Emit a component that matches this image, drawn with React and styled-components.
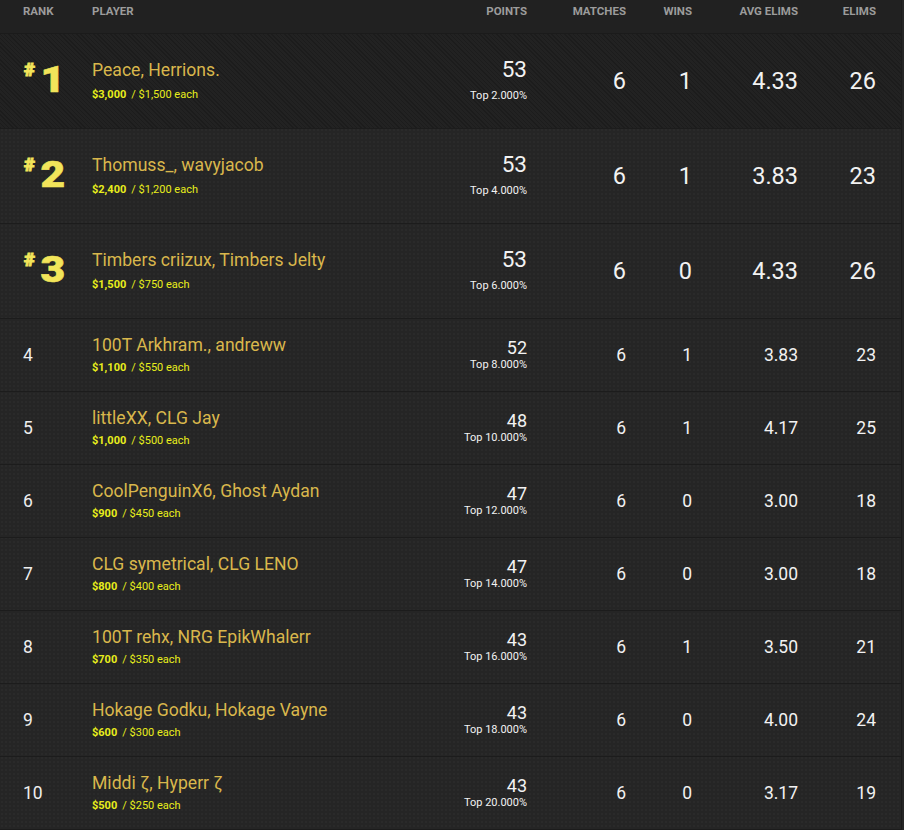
import React from 'react'
import styled, {createGlobalStyle, css} from 'styled-components'

const rows = [
  {rank: 1, name: 'Peace, Herrions.', total: '$3,000', each: '$1,500', points: 53, top: '2.000', matches: 6, wins: 1, avg: '4.33', elims: 26},
  {rank: 2, name: 'Thomuss_, wavyjacob', total: '$2,400', each: '$1,200', points: 53, top: '4.000', matches: 6, wins: 1, avg: '3.83', elims: 23},
  {rank: 3, name: 'Timbers criizux, Timbers Jelty', total: '$1,500', each: '$750', points: 53, top: '6.000', matches: 6, wins: 0, avg: '4.33', elims: 26},
  {rank: 4, name: '100T Arkhram., andreww', total: '$1,100', each: '$550', points: 52, top: '8.000', matches: 6, wins: 1, avg: '3.83', elims: 23},
  {rank: 5, name: 'littleXX, CLG Jay', total: '$1,000', each: '$500', points: 48, top: '10.000', matches: 6, wins: 1, avg: '4.17', elims: 25},
  {rank: 6, name: 'CoolPenguinX6, Ghost Aydan', total: '$900', each: '$450', points: 47, top: '12.000', matches: 6, wins: 0, avg: '3.00', elims: 18},
  {rank: 7, name: 'CLG symetrical, CLG LENO', total: '$800', each: '$400', points: 47, top: '14.000', matches: 6, wins: 0, avg: '3.00', elims: 18},
  {rank: 8, name: '100T rehx, NRG EpikWhalerr', total: '$700', each: '$350', points: 43, top: '16.000', matches: 6, wins: 1, avg: '3.50', elims: 21},
  {rank: 9, name: 'Hokage Godku, Hokage Vayne', total: '$600', each: '$300', points: 43, top: '18.000', matches: 6, wins: 0, avg: '4.00', elims: 24},
  {rank: 10, name: 'Middi ζ, Hyperr ζ', total: '$500', each: '$250', points: 43, top: '20.000', matches: 6, wins: 0, avg: '3.17', elims: 19},
]

const GlobalStyle = createGlobalStyle`
  body {
    margin: 0;
    background: #252525;
    font-family: Roboto, "Liberation Sans", sans-serif;
  }
`

const cols = '69px 335px 100px 99px 66px 106px 78px'

const Board = styled.div`
  width: 901px;
  border-right: 1px solid #1c1c1c;
  background-color: #252525;
  background-image: radial-gradient(rgba(255,255,255,0.025) 1px, transparent 1px);
  background-size: 4px 4px;
`

const HeadRow = styled.div`
  display: grid;
  grid-template-columns: ${cols};
  padding: 4px 25px 0 23px;
  box-sizing: border-box;
  background: #212121;
  border-bottom: 1px solid #1b1b1b;
  height: 34px;
`

const HeadCell = styled.div`
  font-size: 11.5px;
  font-weight: 700;
  color: #9c9c9c;
  text-transform: uppercase;
  text-align: ${p => p.$left ? 'left' : 'right'};
  line-height: 14px;
`

const Row = styled.div`
  display: grid;
  grid-template-columns: ${cols};
  align-items: center;
  padding: 0 25px 0 23px;
  box-sizing: border-box;
  height: ${p => p.$big ? '95px' : '73px'};
  border-bottom: 1px solid #1c1c1c;
  ${p => p.$hatch && css`
    background-color: #222;
    background-image: repeating-linear-gradient(45deg, rgba(0,0,0,0.18) 0 1px, transparent 1px 3px);
  `}
`

const RankPlain = styled.div`
  font-size: 17.5px;
  color: #eeeeee;
`

const RankBig = styled.div`
  display: flex;
  align-items: flex-start;
  color: #f2e55a;
  font-weight: 900;
  margin-top: -4px;
  span:first-child {
    font-size: 19px;
    line-height: 19px;
    margin: 1px 7px 0 1px;
    -webkit-text-stroke: 0.9px #f2e55a;
  }
  span:last-child {
    font-size: 37px;
    line-height: 38px;
    margin-top: 2px;
    transform: scaleX(1.15);
    -webkit-text-stroke: 0.6px #f2e55a;
  }
`

const Player = styled.div`
  display: flex;
  flex-direction: column;
  gap: ${p => p.$big ? '8px' : '6px'};
  margin-top: ${p => p.$big ? '-2px' : '-1px'};
`

const Name = styled.div`
  font-size: 17.6px;
  color: #d9b74c;
  line-height: 20px;
  white-space: nowrap;
`

const Prize = styled.div`
  font-size: 11px;
  color: #e8ee1c;
  b {
    font-weight: 700;
    margin-right: 5px;
  }
`

const Points = styled.div`
  text-align: right;
  color: #f2f2f2;
  margin-top: ${p => p.$big ? '-4px' : '-2px'};
  strong {
    display: block;
    font-weight: 400;
    font-size: ${p => p.$big ? '22.5px' : '18px'};
    line-height: ${p => p.$big ? '26px' : '20px'};
    margin-bottom: ${p => p.$big ? '8px' : '1px'};
  }
  small {
    display: block;
    font-size: 11px;
    line-height: 12px;
  }
`

const Stat = styled.div`
  text-align: right;
  color: #f2f2f2;
  font-size: ${p => p.$big ? '23.5px' : '17.5px'};
`

export default function App() {
  return <>
    <GlobalStyle />
    <Board>
      <HeadRow>
        <HeadCell $left>Rank</HeadCell>
        <HeadCell $left>Player</HeadCell>
        <HeadCell>Points</HeadCell>
        <HeadCell>Matches</HeadCell>
        <HeadCell>Wins</HeadCell>
        <HeadCell>Avg Elims</HeadCell>
        <HeadCell>Elims</HeadCell>
      </HeadRow>
      {rows.map(r => {
        const big = r.rank <= 3
        return <Row key={r.rank} $big={big} $hatch={r.rank === 1}>
          {big
            ? <RankBig><span>#</span><span>{r.rank}</span></RankBig>
            : <RankPlain>{r.rank}</RankPlain>}
          <Player $big={big}>
            <Name>{r.name}</Name>
            <Prize><b>{r.total}</b>/ {r.each} each</Prize>
          </Player>
          <Points $big={big}>
            <strong>{r.points}</strong>
            <small>Top {r.top}%</small>
          </Points>
          <Stat $big={big}>{r.matches}</Stat>
          <Stat $big={big}>{r.wins}</Stat>
          <Stat $big={big}>{r.avg}</Stat>
          <Stat $big={big}>{r.elims}</Stat>
        </Row>
      })}
    </Board>
  </>
}
